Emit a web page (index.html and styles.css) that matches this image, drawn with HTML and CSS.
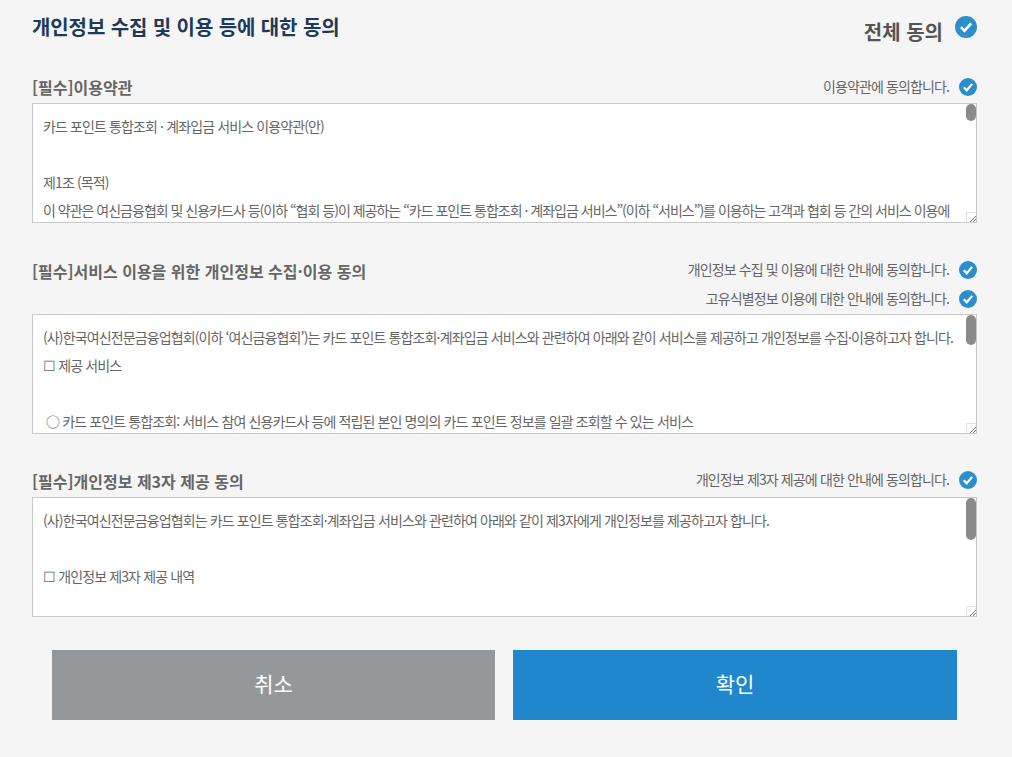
FILE: index.html
```html
<!DOCTYPE html>
<html lang="ko">
<head>
<meta charset="utf-8">
<title>개인정보 수집 및 이용 등에 대한 동의</title>
<link rel="stylesheet" href="styles.css">
</head>
<body>
<main class="page">
  <header class="top">
    <h1 class="title">개인정보 수집 및 이용 등에 대한 동의</h1>
    <div class="all">
      <span class="all-label">전체 동의</span>
      <svg class="check check-lg" viewBox="0 0 22 22"><circle cx="11" cy="11" r="11" fill="#2a8fcb"/><path d="M6 11.2l3.5 3.7 6.6-7.6" fill="none" stroke="#fff" stroke-width="2.6"/></svg>
    </div>
  </header>

  <section class="sec sec-1">
    <div class="head">
      <h2 class="sub">[필수]이용약관</h2>
      <div class="agrees">
        <div class="agree"><span>이용약관에 동의합니다.</span><svg class="check" viewBox="0 0 18 18"><circle cx="9" cy="9" r="9" fill="#2a8fcb"/><path d="M4.8 9.2l2.9 3.1 5.5-6.4" fill="none" stroke="#fff" stroke-width="2.2"/></svg></div>
      </div>
    </div>
    <div class="box">
      <p>카드 포인트 통합조회 · 계좌입금 서비스 이용약관(안)</p>
      <p>&nbsp;</p>
      <p>제1조 (목적)</p>
      <p class="tight">이 약관은 여신금융협회 및 신용카드사 등(이하 “협회 등)이 제공하는 “카드 포인트 통합조회 · 계좌입금 서비스”(이하 “서비스”)를 이용하는 고객과 협회 등 간의 서비스 이용에</p>
      <i class="bar bar-s"></i><i class="grip"></i>
    </div>
  </section>

  <section class="sec sec-2">
    <div class="head">
      <h2 class="sub">[필수]서비스 이용을 위한 개인정보 수집·이용 동의</h2>
      <div class="agrees">
        <div class="agree"><span>개인정보 수집 및 이용에 대한 안내에 동의합니다.</span><svg class="check" viewBox="0 0 18 18"><circle cx="9" cy="9" r="9" fill="#2a8fcb"/><path d="M4.8 9.2l2.9 3.1 5.5-6.4" fill="none" stroke="#fff" stroke-width="2.2"/></svg></div>
        <div class="agree"><span>고유식별정보 이용에 대한 안내에 동의합니다.</span><svg class="check" viewBox="0 0 18 18"><circle cx="9" cy="9" r="9" fill="#2a8fcb"/><path d="M4.8 9.2l2.9 3.1 5.5-6.4" fill="none" stroke="#fff" stroke-width="2.2"/></svg></div>
      </div>
    </div>
    <div class="box">
      <p>(사)한국여신전문금융업협회(이하 ‘여신금융협회’)는 카드 포인트 통합조회·계좌입금 서비스와 관련하여 아래와 같이 서비스를 제공하고 개인정보를 수집·이용하고자 합니다.</p>
      <p>☐ 제공 서비스</p>
      <p>&nbsp;</p>
      <p>&nbsp;○ 카드 포인트 통합조회: 서비스 참여 신용카드사 등에 적립된 본인 명의의 카드 포인트 정보를 일괄 조회할 수 있는 서비스</p>
      <i class="bar bar-m"></i><i class="grip"></i>
    </div>
  </section>

  <section class="sec sec-3">
    <div class="head">
      <h2 class="sub">[필수]개인정보 제3자 제공 동의</h2>
      <div class="agrees">
        <div class="agree"><span>개인정보 제3자 제공에 대한 안내에 동의합니다.</span><svg class="check" viewBox="0 0 18 18"><circle cx="9" cy="9" r="9" fill="#2a8fcb"/><path d="M4.8 9.2l2.9 3.1 5.5-6.4" fill="none" stroke="#fff" stroke-width="2.2"/></svg></div>
      </div>
    </div>
    <div class="box">
      <p>(사)한국여신전문금융업협회는 카드 포인트 통합조회·계좌입금 서비스와 관련하여 아래와 같이 제3자에게 개인정보를 제공하고자 합니다.</p>
      <p>&nbsp;</p>
      <p>☐ 개인정보 제3자 제공 내역</p>
      <i class="bar bar-l"></i><i class="grip"></i>
    </div>
  </section>

  <div class="actions">
    <button class="btn btn-cancel" type="button">취소</button>
    <button class="btn btn-ok" type="button">확인</button>
  </div>
</main>
</body>
</html>
```
FILE: styles.css
```css
* { box-sizing: border-box; }
html, body { margin: 0; padding: 0; }
body {
  width: 1012px;
  height: 757px;
  overflow: hidden;
  background: #f5f5f5;
  font-family: "Noto Sans CJK KR", "Noto Sans", sans-serif;
  color: #666;
}
.page { padding: 0 35px 0 32px; }
.top {
  display: flex;
  justify-content: space-between;
  height: 78px;
}
.title {
  margin: 14px 0 0;
  font-size: 20px;
  line-height: 26px;
  font-weight: 700;
  letter-spacing: -0.1px;
  color: #1f3a58;
}
.all {
  display: flex;
  align-items: flex-start;
  gap: 12px;
  margin-top: 16px;
}
.all-label {
  margin-top: 3px;
  font-size: 20px;
  line-height: 26px;
  font-weight: 700;
  color: #555;
}
.check { display: block; width: 18px; height: 18px; flex: none; }
.check-lg { width: 22px; height: 22px; }
.head {
  display: flex;
  justify-content: space-between;
  align-items: flex-start;
}
.sub {
  margin: 0;
  font-size: 16px;
  line-height: 22px;
  font-weight: 700;
  color: #666;
}
.agrees { display: flex; flex-direction: column; gap: 11px; }
.agree {
  display: flex;
  justify-content: flex-end;
  align-items: center;
  gap: 10px;
  height: 18px;
  font-size: 14px;
  letter-spacing: -0.88px;
  color: #666;
}
.agree span { margin-top: -2px; }
.sec-1 .head { height: 25px; }
.sec-1 .sub { margin-top: -2px; }
.sec-2 { margin-top: 38px; }
.sec-2 .head { height: 53px; }
.sec-2 .sub { margin-top: -1px; }
.sec-3 { margin-top: 37px; }
.sec-3 .head { height: 26px; }
.sec-3 .sub { margin-top: -1px; }
.box {
  position: relative;
  height: 120px;
  padding: 8px 10px;
  overflow: hidden;
  background: #fff;
  border: 1px solid #c9c9c9;
  font-size: 14px;
  letter-spacing: -0.88px;
  color: #666;
}
.box p {
  margin: 0;
  height: 28px;
  line-height: 28px;
  white-space: nowrap;
}
.box .tight { letter-spacing: -1px; }
.bar {
  position: absolute;
  top: 0;
  right: 0;
  width: 10px;
  background: #8a8a8a;
  border-radius: 5px;
}
.bar-s { height: 17px; }
.bar-m { height: 30px; }
.bar-l { height: 42px; }
.grip {
  position: absolute;
  right: 0;
  bottom: 0;
  width: 10px;
  height: 10px;
  background: linear-gradient(135deg, #fff 0 62%, #777 62% 70%, #fff 70% 80%, #777 80% 88%, #fff 88%);
  border-left: 1px solid #e2e2e2;
  border-top: 1px solid #e2e2e2;
}
.actions {
  display: flex;
  gap: 18px;
  margin: 33px 20px 0;
}
.btn {
  height: 70px;
  padding: 0 0 4px;
  border: 0;
  color: #fff;
  font-family: inherit;
  font-size: 21px;
  font-weight: 400;
}
.btn-cancel { width: 443px; background: #94989b; }
.btn-ok { width: 444px; background: #2187cd; }
```
